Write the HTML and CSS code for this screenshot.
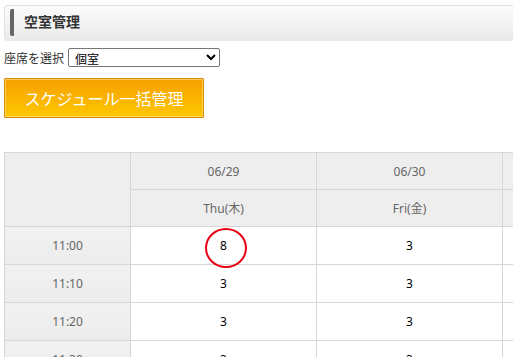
FILE: index.html
```html
<!DOCTYPE html>
<html lang="ja">
<head>
  <meta charset="UTF-8">
  <title>空室管理</title>
  <link rel="stylesheet" href="styles.css">
</head>
<body>
  <div class="page-head">
    <h1>空室管理</h1>
  </div>

  <div class="seat-select">
    <label for="seat">座席を選択</label>
    <select id="seat">
      <option>個室</option>
      <option>オープン席</option>
    </select>
  </div>

  <button class="btn-orange">スケジュール一括管理</button>

  <table class="schedule">
    <colgroup>
      <col class="col-time">
      <col class="col-day">
      <col class="col-day">
      <col class="col-rest">
    </colgroup>
    <thead>
      <tr>
        <th rowspan="2"></th>
        <th>06/29</th>
        <th>06/30</th>
        <th></th>
      </tr>
      <tr>
        <th>Thu(木)</th>
        <th>Fri(金)</th>
        <th></th>
      </tr>
    </thead>
    <tbody>
      <tr>
        <th>11:00</th>
        <td><span class="marked">8</span></td>
        <td>3</td>
        <td></td>
      </tr>
      <tr>
        <th>11:10</th>
        <td>3</td>
        <td>3</td>
        <td></td>
      </tr>
      <tr>
        <th>11:20</th>
        <td>3</td>
        <td>3</td>
        <td></td>
      </tr>
      <tr>
        <th>11:30</th>
        <td>3</td>
        <td>3</td>
        <td></td>
      </tr>
    </tbody>
  </table>
</body>
</html>
```

FILE: styles.css
```css
/* Base */
* {
  box-sizing: border-box;
}

body {
  margin: 0;
  padding: 5px 0 0 4px;
  font-family: "Noto Sans", "Noto Sans CJK JP", sans-serif;
  font-size: 12px;
  color: #333;
  background: #fff;
  overflow: hidden;
}

/* Page heading */
.page-head {
  height: 36px;
  border: 1px solid #e4e4e4;
  border-right: none;
  border-bottom: none;
  border-radius: 4px 0 0 4px;
  background: linear-gradient(to bottom, #fcfcfc, #e9e9e9);
  padding: 3px 0 0 5px;
}

.page-head h1 {
  margin: 0;
  height: 27px;
  padding-left: 10px;
  border-left: 4px solid #666;
  border-radius: 2px;
  font-size: 14px;
  font-weight: bold;
  line-height: 25px;
  color: #333;
}

/* Seat select */
.seat-select {
  display: flex;
  align-items: center;
  gap: 4px;
  margin-top: 7px;
  height: 19px;
}

.seat-select label {
  font-size: 12px;
  color: #333;
}

.seat-select select {
  width: 152px;
  height: 19px;
  font-family: "Noto Sans CJK JP", sans-serif;
  font-size: 12px;
  color: #000;
  padding: 0 2px;
  border: 1px solid #767676;
  border-radius: 2px;
  background: #fff;
}

/* Orange button */
.btn-orange {
  display: block;
  width: 200px;
  height: 40px;
  margin-top: 11px;
  border: 1px solid #d88a00;
  border-radius: 1px;
  background: linear-gradient(to bottom, #f6a000, #ffc700);
  box-shadow: inset 0 0 0 1px rgba(255, 230, 150, 0.6);
  font-family: "Noto Sans CJK JP", sans-serif;
  font-size: 16px;
  color: #fff;
  cursor: pointer;
}

/* Schedule table */
.schedule {
  margin-top: 34px;
  border-collapse: collapse;
  table-layout: fixed;
  width: 520px;
}

.col-time {
  width: 126px;
}

.col-day {
  width: 186px;
}

.schedule th,
.schedule td {
  border: 1px solid #d6d6d6;
  text-align: center;
  font-weight: normal;
  padding: 0;
}

.schedule thead th {
  height: 37px;
  background: #eeeeee;
  color: #666;
}

.schedule tbody tr {
  height: 38px;
}

.schedule tbody th {
  background: linear-gradient(to bottom, #f1f1f1, #ececec);
  color: #666;
}

.schedule td {
  background: #fff;
  color: #000;
}

.marked {
  position: relative;
  display: inline-block;
}

.marked::after {
  content: "";
  position: absolute;
  left: 50%;
  top: 50%;
  width: 38px;
  height: 36px;
  margin: -18px 0 0 -19px;
  border: 2px solid #e60012;
  border-radius: 50%;
}
```
